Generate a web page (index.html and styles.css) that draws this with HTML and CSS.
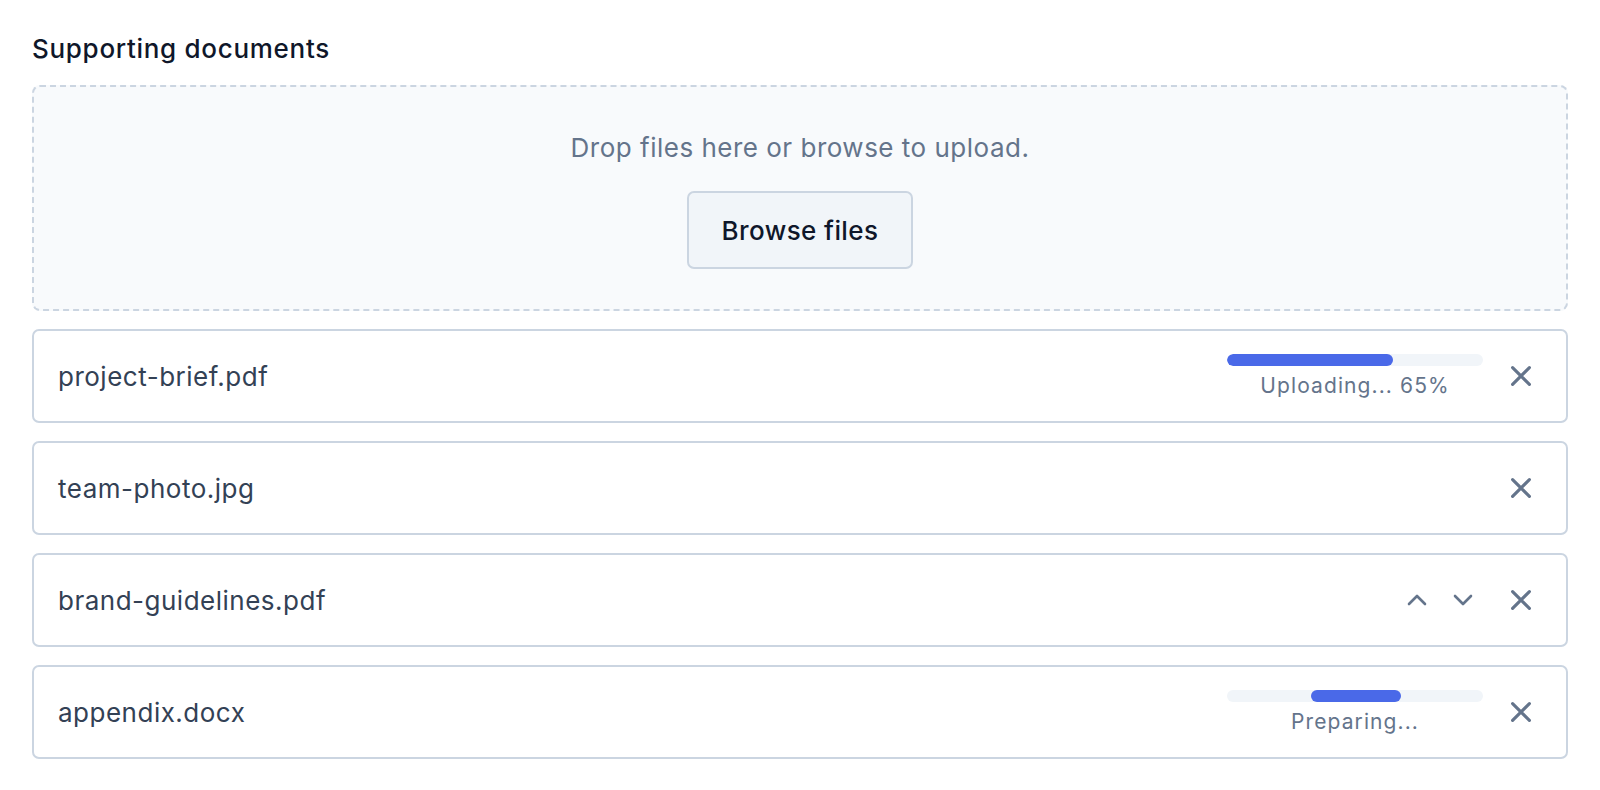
FILE: index.html
```html
<!DOCTYPE html>
<html lang="en">
<head>
  <meta charset="UTF-8">
  <meta name="viewport" content="width=device-width, initial-scale=1.0">
  <title>Supporting documents</title>
  <link rel="stylesheet" href="styles.css">
</head>
<body>
  <section class="uploader">
    <h2 class="uploader-title">Supporting documents</h2>

    <div class="dropzone">
      <p class="dropzone-text">Drop files here or browse to upload.</p>
      <button class="browse-btn">Browse files</button>
    </div>

    <ul class="file-list">
      <li class="file-row">
        <span class="file-name">project-brief.pdf</span>
        <div class="file-status">
          <div class="progress"><div class="progress-fill" style="width: 65%;"></div></div>
          <span class="status-text">Uploading... 65%</span>
        </div>
        <button class="icon-btn remove-btn" aria-label="Remove">
          <svg viewBox="0 0 20 20" width="24" height="24"><path d="M3 3 L17 17 M17 3 L3 17"/></svg>
        </button>
      </li>

      <li class="file-row">
        <span class="file-name">team-photo.jpg</span>
        <button class="icon-btn remove-btn" aria-label="Remove">
          <svg viewBox="0 0 20 20" width="24" height="24"><path d="M3 3 L17 17 M17 3 L3 17"/></svg>
        </button>
      </li>

      <li class="file-row">
        <span class="file-name">brand-guidelines.pdf</span>
        <div class="move-btns">
          <button class="icon-btn" aria-label="Move up">
            <svg viewBox="0 0 20 12" width="20" height="12"><path d="M2 10 L10 2 L18 10"/></svg>
          </button>
          <button class="icon-btn" aria-label="Move down">
            <svg viewBox="0 0 20 12" width="20" height="12"><path d="M2 2 L10 10 L18 2"/></svg>
          </button>
        </div>
        <button class="icon-btn remove-btn" aria-label="Remove">
          <svg viewBox="0 0 20 20" width="24" height="24"><path d="M3 3 L17 17 M17 3 L3 17"/></svg>
        </button>
      </li>

      <li class="file-row">
        <span class="file-name">appendix.docx</span>
        <div class="file-status">
          <div class="progress"><div class="progress-fill indeterminate"></div></div>
          <span class="status-text">Preparing...</span>
        </div>
        <button class="icon-btn remove-btn" aria-label="Remove">
          <svg viewBox="0 0 20 20" width="24" height="24"><path d="M3 3 L17 17 M17 3 L3 17"/></svg>
        </button>
      </li>
    </ul>
  </section>
</body>
</html>
```

FILE: styles.css
```css
body {
  margin: 0;
  padding: 0;
  background: white;
  font-family: Inter, "Noto Sans", sans-serif;
  color: #334155;
}

.uploader {
  padding: 30px 32px 0;
}

.uploader-title {
  margin: 0 0 17px;
  font-size: 26px;
  line-height: 38px;
  font-weight: 500;
  letter-spacing: 0.7px;
  color: #0f172a;
}

/* Drop area */
.dropzone {
  border: 2px dashed #cbd5e1;
  border-radius: 8px;
  background: #f8fafc;
  padding: 43px 20px 40px;
  display: flex;
  flex-direction: column;
  align-items: center;
  gap: 25px;
}

.dropzone-text {
  margin: 0;
  font-size: 26px;
  line-height: 36px;
  letter-spacing: 0.5px;
  color: #64748b;
}

.browse-btn {
  width: 226px;
  height: 78px;
  border: 2px solid #cbd5e1;
  border-radius: 7px;
  background: #f1f5f9;
  font-family: inherit;
  font-size: 26px;
  font-weight: 500;
  letter-spacing: 0.4px;
  color: #0f172a;
  cursor: pointer;
}

/* File rows */
.file-list {
  list-style: none;
  margin: 18px 0 0;
  padding: 0;
  display: flex;
  flex-direction: column;
  gap: 18px;
}

.file-row {
  height: 94px;
  box-sizing: border-box;
  border: 2px solid #cbd5e1;
  border-radius: 7px;
  padding: 0 25px 0 24px;
  display: flex;
  align-items: center;
}

.file-name {
  flex: 1;
  font-size: 26px;
  letter-spacing: 0.5px;
  color: #334155;
}

.file-status {
  width: 256px;
  display: flex;
  flex-direction: column;
  align-items: center;
  gap: 7px;
  margin-right: 18px;
}

.progress {
  width: 100%;
  height: 12px;
  border-radius: 6px;
  background: #f1f5f9;
  overflow: hidden;
}

.progress-fill {
  height: 100%;
  border-radius: 6px;
  background: #4a69e8;
}

.progress-fill.indeterminate {
  width: 35%;
  margin-left: 33%;
}

.status-text {
  font-size: 21px;
  line-height: 26px;
  letter-spacing: 1.1px;
  color: #64748b;
}

.icon-btn {
  width: 40px;
  height: 40px;
  padding: 0;
  border: none;
  background: none;
  display: flex;
  align-items: center;
  justify-content: center;
  cursor: pointer;
}

.icon-btn svg {
  fill: none;
  stroke: #64748b;
  stroke-width: 2.6;
  stroke-linecap: round;
  stroke-linejoin: round;
}

.move-btns {
  display: flex;
  gap: 6px;
  margin-right: 18px;
}
```
